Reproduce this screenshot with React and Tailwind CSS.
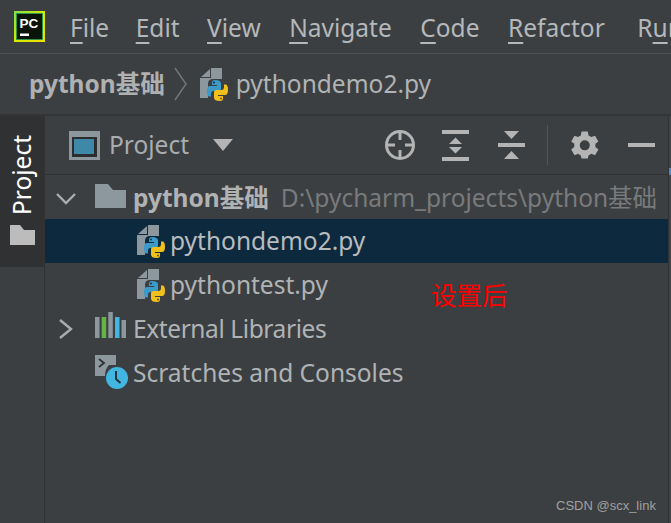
import React from 'react';

const ui = { fontFamily: '"Noto Sans", "Noto Sans CJK SC", sans-serif' };

const PythonFile = ({ className }) => (
    <svg width="29" height="33" viewBox="0 0 29 33" className={className}>
        <path d="M1 9 L10 1 V9 Z" fill="#8c979e" />
        <path d="M11 0 H22 V11 H13 Q8 11 8 16 V30 H0 V10 H11 Z" fill="#8c979e" />
        <path d="M15 12 Q21 12 21 15.500 V21 Q21 23 18.500 23 H13.500 Q11 23 11 26 V28.500 H9.500 Q7 28.500 7 23 Q7 18 10 18 H17 V17 H12 V14.500 Q12 12 15 12 Z" fill="#3c9ac9" />
        <path d="M15 12 Q21 12 21 15.500 V21 Q21 23 18.500 23 H13.500 Q11 23 11 26 V28.500 H9.500 Q7 28.500 7 23 Q7 18 10 18 H17 V17 H12 V14.500 Q12 12 15 12 Z" fill="#f2c01a" transform="rotate(180 17.500 22.500)" />
        <circle cx="14" cy="14.500" r="1" fill="#12384f" />
        <circle cx="21" cy="30.500" r="1" fill="#6b5406" />
    </svg>
);

const Chevron = ({ open }) => (
    <svg width="20" height="20" viewBox="0 0 20 20" fill="none" stroke="#a9adb0" strokeWidth="2.400">
        {open ? <path d="M1 6 L10 15 L19 6" /> : <path d="M4 1 L15 10 L4 19" />}
    </svg>
);

const MenuItem = ({ mnemonic, rest, before, className }) => (
    <span className={className}>
        {before}
        <span className="underline decoration-2 underline-offset-[5px]">{mnemonic}</span>
        {rest}
    </span>
);

const Row = ({ selected, className = '', children }) => (
    <div className={`flex h-[44px] items-center ${selected ? 'bg-[#0d293e]' : ''} ${className}`}>{children}</div>
);

export default function App() {
    return (
        <div style={ui} className="relative flex h-[523px] w-[671px] flex-col overflow-hidden bg-[#3c3f41] text-[#bbbbbb]">
            {/* menu bar */}
            <div className="flex h-[54px] shrink-0 items-center border-b border-[#515151] pl-[14px]">
                <svg width="31" height="31" viewBox="0 0 31 31" className="mr-[25px] shrink-0">
                    <defs>
                        <linearGradient id="pcEdge" x1="0" y1="0" x2="1" y2="1">
                            <stop offset="0" stopColor="#7fe04a" />
                            <stop offset="0.500" stopColor="#d9ea00" />
                            <stop offset="1" stopColor="#f0e000" />
                        </linearGradient>
                    </defs>
                    <rect width="31" height="31" fill="url(#pcEdge)" />
                    <rect x="2.500" y="2.500" width="26" height="26" fill="#0a1408" stroke="#1f9d55" strokeWidth="0.800" />
                    <text x="5.500" y="16.500" fill="#ffffff" fontSize="13.500" fontWeight="700" fontFamily="Liberation Sans">PC</text>
                    <rect x="6" y="22.500" width="9" height="2.500" fill="#ffffff" />
                </svg>
                <div className="flex gap-[28.500px] whitespace-nowrap pt-[3px] text-[24.500px] leading-none text-[#b4b8ba]">
                    <MenuItem mnemonic="F" rest="ile" />
                    <MenuItem mnemonic="E" rest="dit" className="ml-[-2px]" />
                    <MenuItem mnemonic="V" rest="iew" className="ml-[-1px]" />
                    <MenuItem mnemonic="N" rest="avigate" />
                    <MenuItem mnemonic="C" rest="ode" />
                    <MenuItem mnemonic="R" rest="efactor" />
                    <MenuItem before="R" mnemonic="u" rest="n" className="ml-[4px]" />
                </div>
            </div>

            {/* breadcrumb */}
            <div className="flex h-[62px] shrink-0 items-center border-b-2 border-[#333537] pl-[29px] text-[24.500px] text-[#b0b3b5]">
                <span className="font-bold text-[#aeb0b2]">python基础</span>
                <svg width="14" height="34" viewBox="0 0 14 34" fill="none" stroke="#70757a" strokeWidth="1.500" className="ml-[9px] mr-[12px]">
                    <path d="M1 1 L12 17 L1 33" />
                </svg>
                <PythonFile />
                <span className="ml-[7px]">pythondemo2.py</span>
            </div>

            <div className="flex min-h-0 flex-1">
                {/* tool window strip */}
                <div className="w-[45px] shrink-0 border-r border-[#323232]">
                    <div className="flex h-[151px] flex-col items-center bg-[#2f3133] pt-[19px]">
                        <span className="text-[24.500px] leading-none text-white [writing-mode:vertical-rl] rotate-180">Project</span>
                        <svg width="25" height="20" viewBox="0 0 25 20" className="mt-[10px]">
                            <path d="M0 0 H10 L14 5 H25 V20 H0 Z" fill="#bcbcbc" />
                        </svg>
                    </div>
                </div>

                <div className="flex min-w-0 flex-1 flex-col">
                    {/* project header */}
                    <div className="flex h-[59px] shrink-0 items-center border-b border-[#323232] pl-[24px]">
                        <svg width="31" height="29" viewBox="0 0 31 29">
                            <rect width="31" height="29" fill="#8c979e" />
                            <rect x="3" y="6" width="25" height="20" fill="#2b2d2e" />
                            <rect x="5" y="8" width="20" height="15" fill="#3f89a8" />
                        </svg>
                        <span className="ml-[9px] text-[24.500px] text-[#a9adb0]">Project</span>
                        <svg width="20" height="12" viewBox="0 0 20 12" className="ml-[24px]">
                            <path d="M0 0 H20 L10 12 Z" fill="#b4b4b4" />
                        </svg>
                        <div className="ml-[151px] flex items-center">
                            <svg width="32" height="32" viewBox="0 0 32 32" fill="none" stroke="#b4b4b4" strokeWidth="3">
                                <circle cx="16" cy="16" r="13.500" />
                                <path d="M16 2 V11 M16 21 V30 M2 16 H11 M21 16 H30" />
                            </svg>
                            <svg width="27" height="31" viewBox="0 0 27 31" fill="#b4b4b4" className="ml-[26px]">
                                <rect width="27" height="4" />
                                <rect y="27" width="27" height="4" />
                                <path d="M13.500 7.500 L20 14 H7 Z M13.500 23.500 L20 17 H7 Z" />
                            </svg>
                            <svg width="27" height="28" viewBox="0 0 27 28" fill="#b4b4b4" className="ml-[29px]">
                                <rect y="12" width="27" height="4" />
                                <path d="M6 0 H21 L13.500 8 Z M6 28 H21 L13.500 20 Z" />
                            </svg>
                            <div className="ml-[22px] h-[40px] w-px bg-[#515558]" />
                            <svg width="28" height="30" viewBox="0 0 24 24" fill="#b4b4b4" className="ml-[23px]">
                                <path fillRule="evenodd" d="M14.400 0.500 L15 3.800 L17.400 5.200 L20.600 4 L23.500 8.900 L20.900 11 V13.800 L23.500 15.900 L20.600 20.800 L17.400 19.600 L15 21 L14.400 23.500 H9 L8.400 21 L6 19.600 L3 20.800 L0.200 15.900 L2.800 13.800 V11 L0.200 8.900 L3 4 L6 5.200 L8.400 3.800 L9 0.500 Z M11.800 8 A4.300 4.300 0 1 0 11.801 16.600 A4.300 4.300 0 1 0 11.800 8 Z" />
                            </svg>
                            <div className="ml-[29px] h-[4px] w-[27px] bg-[#b4b4b4]" />
                        </div>
                    </div>

                    {/* tree */}
                    <div className="text-[24.500px] leading-none">
                        <Row className="pt-[2px]">
                            <span className="ml-[11px] flex w-[20px]"><Chevron open /></span>
                            <svg width="31" height="24" viewBox="0 0 31 24" className="ml-[19px] mb-[4px]">
                                <path d="M0 0 H13 L18 6 H31 V24 H0 Z" fill="#8c979e" />
                            </svg>
                            <span className="ml-[7px] font-bold text-[#b0b2b4]">python基础</span>
                            <span className="ml-[12px] whitespace-nowrap text-[#787a7c]">D:\pycharm_projects\python基础</span>
                        </Row>
                        <Row selected>
                            <PythonFile className="ml-[92px]" />
                            <span className="ml-[4px] text-[#b8bcbe]">pythondemo2.py</span>
                        </Row>
                        <Row>
                            <PythonFile className="ml-[92px]" />
                            <span className="ml-[4px] text-[#b0b3b5]">pythontest.py</span>
                        </Row>
                        <Row>
                            <span className="ml-[11px] flex w-[20px]"><Chevron /></span>
                            <svg width="31" height="26" viewBox="0 0 31 26" className="ml-[19px] mb-[8px]">
                                <rect y="5" width="4.500" height="21" fill="#8c979e" />
                                <rect x="6.700" y="5" width="4.500" height="21" fill="#62b543" />
                                <rect x="13.300" y="0" width="4.500" height="26" fill="#8c979e" />
                                <rect x="20" y="5" width="4.500" height="21" fill="#40b6e0" />
                                <rect x="26.500" y="8" width="4.500" height="18" fill="#8c979e" />
                            </svg>
                            <span className="ml-[7px] tracking-[-0.400px] text-[#b0b3b5]">External Libraries</span>
                        </Row>
                        <Row>
                            <svg width="36" height="36" viewBox="0 0 36 36" className="ml-[50px]">
                                <path d="M0 0 H21 V10 H14 Q10 14 10 21 H0 Z" fill="#8c979e" />
                                <path d="M4 4 L9 8 L4 12" fill="none" stroke="#2f3133" strokeWidth="1.800" />
                                <circle cx="22" cy="23" r="11" fill="#40b6e0" />
                                <path d="M21 16 V24 L25.500 28" fill="none" stroke="#26323a" strokeWidth="2" />
                            </svg>
                            <span className="ml-[2px] text-[#b0b3b5]">Scratches and Consoles</span>
                        </Row>
                    </div>
                </div>

                {/* scrollbar gutter */}
                <div className="flex w-[3px] shrink-0 flex-col border-l border-[#323232] bg-[#414446]">
                    <div className="mt-[52px] h-[7px] bg-[#3f8fdc]" />
                </div>
            </div>

            {/* annotation and watermark sit on top of the screenshot */}
            <span className="absolute left-[431px] top-[281px] text-[25.500px] leading-none text-[#ff0000] [font-family:'Noto_Sans_CJK_SC',serif]">设置后</span>
            <span className="absolute left-[556px] top-[499px] text-[13px] leading-none text-[#a0a0a0] [font-family:'Liberation_Sans',sans-serif]">CSDN @scx_link</span>
        </div>
    );
}
